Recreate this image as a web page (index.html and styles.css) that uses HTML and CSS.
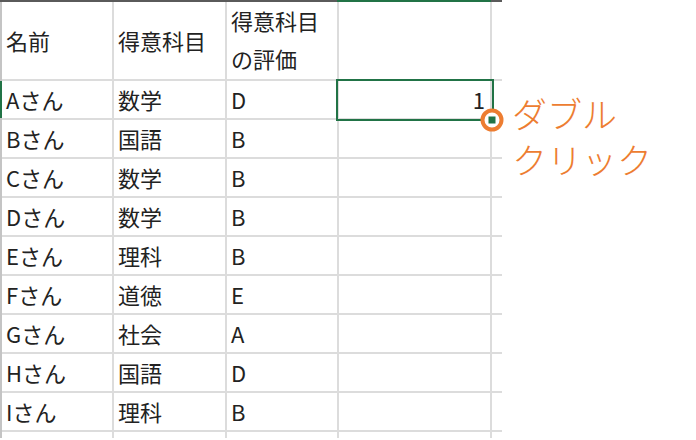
FILE: index.html
```html
<!DOCTYPE html>
<html lang="ja">
<head>
<meta charset="utf-8">
<link rel="stylesheet" href="styles.css">
</head>
<body>
<div class="page">
  <div class="sheet-wrap">
    <div class="topbar">
      <div class="tb-dark tb-a"></div>
      <div class="tb-green"></div>
      <div class="tb-dark tb-e"></div>
    </div>
    <div class="grid">
      <div class="cell">名前</div>
      <div class="cell">得意科目</div>
      <div class="cell two">得意科目<br>の評価</div>
      <div class="cell"></div>
      <div class="cell"></div>

      <div class="cell rowsel">Aさん</div><div class="cell">数学</div><div class="cell">D</div><div class="cell num">1</div><div class="cell"></div>
      <div class="cell">Bさん</div><div class="cell">国語</div><div class="cell">B</div><div class="cell"></div><div class="cell"></div>
      <div class="cell">Cさん</div><div class="cell">数学</div><div class="cell">B</div><div class="cell"></div><div class="cell"></div>
      <div class="cell">Dさん</div><div class="cell">数学</div><div class="cell">B</div><div class="cell"></div><div class="cell"></div>
      <div class="cell">Eさん</div><div class="cell">理科</div><div class="cell">B</div><div class="cell"></div><div class="cell"></div>
      <div class="cell">Fさん</div><div class="cell">道徳</div><div class="cell">E</div><div class="cell"></div><div class="cell"></div>
      <div class="cell">Gさん</div><div class="cell">社会</div><div class="cell">A</div><div class="cell"></div><div class="cell"></div>
      <div class="cell">Hさん</div><div class="cell">国語</div><div class="cell">D</div><div class="cell"></div><div class="cell"></div>
      <div class="cell">Iさん</div><div class="cell">理科</div><div class="cell">B</div><div class="cell"></div><div class="cell"></div>
      <div class="cell"></div><div class="cell"></div><div class="cell"></div><div class="cell"></div><div class="cell"></div>
    </div>
    <div class="selection"></div>
    <svg class="handle" width="28" height="28" viewBox="0 0 28 28">
      <circle cx="14" cy="14" r="9.5" fill="#ffffff" stroke="#ed7d31" stroke-width="4"/>
      <rect x="10.5" y="10.5" width="7" height="7" fill="#217346"/>
    </svg>
  </div>
  <div class="note">ダブル<br>クリック</div>
</div>
</body>
</html>
```
FILE: styles.css
```css
html, body {
  margin: 0;
  padding: 0;
  background: #ffffff;
}
body {
  width: 696px;
  height: 440px;
  overflow: hidden;
  font-family: "Noto Sans CJK JP", "Noto Sans", sans-serif;
  color: #222222;
}
.page {
  display: flex;
  align-items: flex-start;
}
.sheet-wrap {
  position: relative;
  width: 502px;
}
.topbar {
  display: flex;
  height: 2px;
}
.tb-dark { background: #5a5a5a; }
.tb-a { width: 337px; }
.tb-green { width: 154px; background: #217346; }
.tb-e { width: 11px; }
.grid {
  display: grid;
  grid-template-columns: 110px 111px 110px 151px 10px;
  grid-template-rows: 77px repeat(9, 37px) 6px;
  gap: 2px;
  padding-left: 2px;
  background: #dcdcdc;
  box-shadow: inset 2px 0 0 #c4c4c4;
}
.cell {
  background: #ffffff;
  display: flex;
  align-items: center;
  padding-left: 4px;
  padding-bottom: 2px;
  font-size: 22px;
  line-height: 34px;
  white-space: nowrap;
  overflow: hidden;
}
.cell.two {
  line-height: 38px;
  padding-bottom: 4px;
}
.cell.num {
  justify-content: flex-end;
  padding-right: 5px;
}
.rowsel {
  box-shadow: -2px 0 0 #217346;
}
.selection {
  position: absolute;
  left: 336px;
  top: 79px;
  width: 158px;
  height: 42px;
  box-sizing: border-box;
  border: 2px solid #217346;
}
.handle {
  position: absolute;
  left: 478px;
  top: 106px;
}
.note {
  margin-left: 10px;
  padding-top: 90px;
  color: #ed7d31;
  font-size: 35px;
  line-height: 46px;
  font-weight: 300;
  white-space: nowrap;
}
```
